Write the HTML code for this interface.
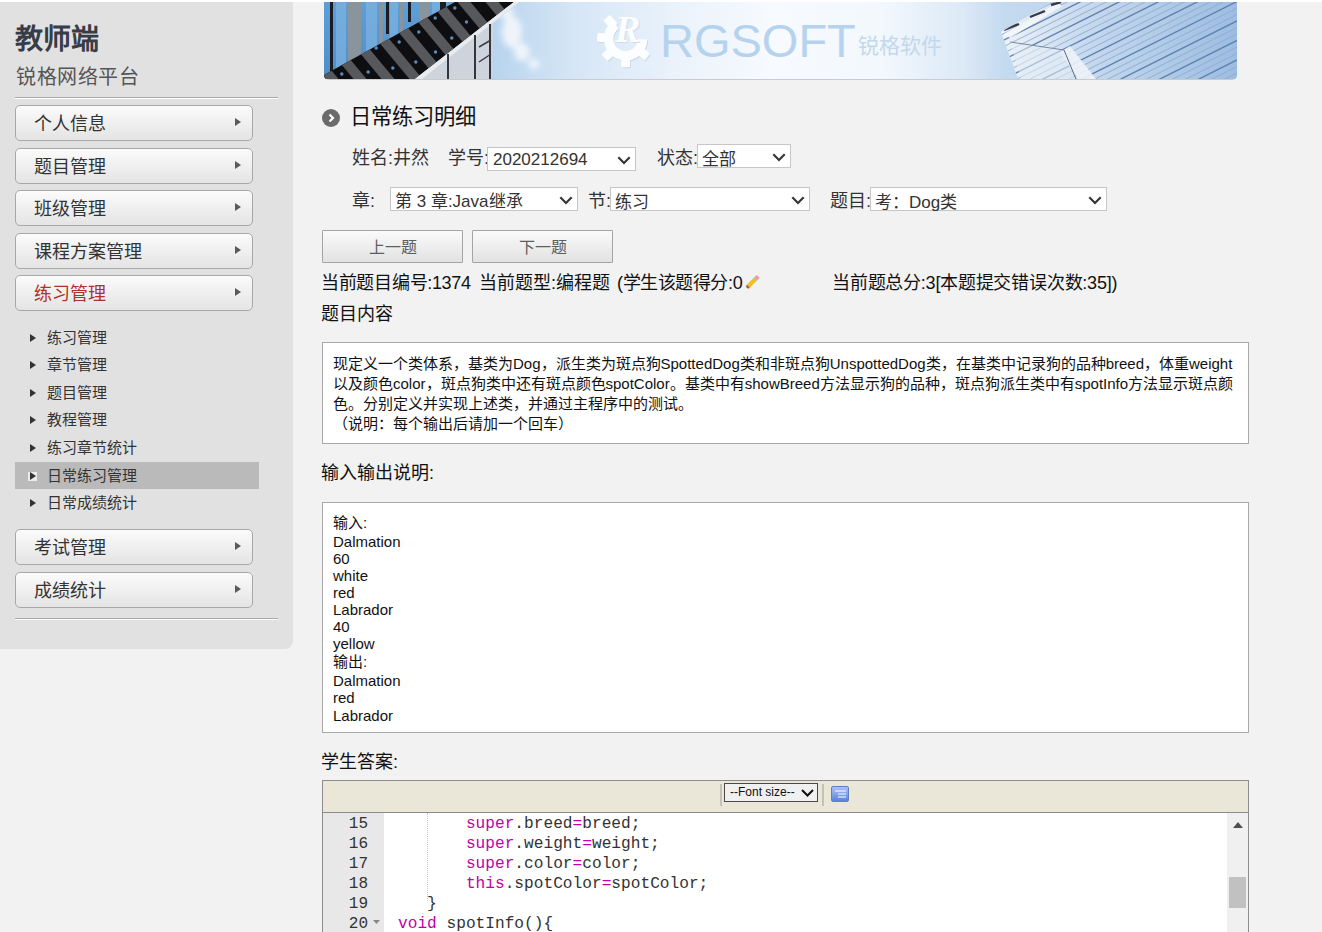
<!DOCTYPE html>
<html lang="zh-CN"><head><meta charset="utf-8">
<style>
*{margin:0;padding:0;box-sizing:border-box}
html,body{width:1322px;height:932px;overflow:hidden}
body{background:#f2f2f2;font-family:"Liberation Sans",sans-serif;color:#222;position:relative}
.abs{position:absolute;white-space:nowrap}
#topband{position:absolute;left:0;top:0;width:1322px;height:2px;background:#fff}
#side{position:absolute;left:-8px;top:2px;width:301px;height:647px;background:#e1e1e1;border-radius:0 0 8px 8px}
.hr{position:absolute;left:15px;width:263px;height:2px;border-top:1px solid #a9a9a9;border-bottom:1px solid #fff}
.mbtn{position:absolute;left:15px;width:238px;height:36px;border:1px solid #a8a8a8;border-radius:5px;
 background:linear-gradient(#fbfbfb,#e4e4e4);font-size:18px;color:#333;line-height:37px;padding-left:18px}
.mbtn .ar{position:absolute;left:219px;top:12px;width:0;height:0;border-left:6.5px solid #5a5a5a;border-top:4.5px solid transparent;border-bottom:4.5px solid transparent}
.sub{position:absolute;left:15px;width:244px;height:27px;font-size:15px;color:#333;line-height:27px;padding-left:32px}
.sub .ar{position:absolute;left:15px;top:10px;width:0;height:0;border-left:6px solid #333;border-top:4px solid transparent;border-bottom:4px solid transparent}
.sub.on .bx{position:absolute;left:13px;top:10px;width:9px;height:9px;background:#ececec}
.sub.on{background:#bababa}

.lbl{font-size:18px;color:#333;line-height:24px}
.dd{position:absolute;height:24px;border:1px solid #c6c6c6;background:#fff;font-size:17px;color:#333;line-height:22px;padding-left:4px;white-space:nowrap}
.dd svg{position:absolute;right:4px;top:7.5px}
.nbtn{position:absolute;top:230px;width:141px;height:33px;border:1px solid #a4a4a4;border-radius:1px;background:linear-gradient(#fafafa,#e2e2e2);font-size:16px;color:#5e5e5e;text-align:center;line-height:33px}
.box{position:absolute;left:322px;width:927px;border:1px solid #a9a9a9;background:#fff}
.dl{position:absolute;left:10px;font-size:15px;color:#111;line-height:20px;white-space:nowrap}
.gn{position:absolute;left:0;margin-top:-1px;width:45px;text-align:right;font-family:"Liberation Mono",monospace;font-size:16px;color:#333;line-height:20px}
.cl{position:absolute;left:75px;margin-top:-1px;font-family:"Liberation Mono",monospace;font-size:16.17px;color:#333;line-height:20px;white-space:pre}
.cl b{font-weight:normal;color:#c400a8}
</style></head><body>
<div id="topband"></div>
<div id="side"></div>
<div class="abs" style="left:15px;top:22.5px;font-size:28px;font-weight:bold;color:#373c47;line-height:34px">教师端</div>
<div class="abs" style="left:16px;top:64px;font-size:20px;letter-spacing:0.6px;color:#555;line-height:26px">锐格网络平台</div>
<div class="hr" style="top:97px"></div>
<div class="mbtn" style="top:105px">个人信息<span class="ar"></span></div>
<div class="mbtn" style="top:148px">题目管理<span class="ar"></span></div>
<div class="mbtn" style="top:190px">班级管理<span class="ar"></span></div>
<div class="mbtn" style="top:233px">课程方案管理<span class="ar"></span></div>
<div class="mbtn" style="top:275px;color:#b0302a">练习管理<span class="ar"></span></div>
<div class="sub" style="top:324px">练习管理<span class="ar"></span></div>
<div class="sub" style="top:351px">章节管理<span class="ar"></span></div>
<div class="sub" style="top:379px">题目管理<span class="ar"></span></div>
<div class="sub" style="top:406px">教程管理<span class="ar"></span></div>
<div class="sub" style="top:434px">练习章节统计<span class="ar"></span></div>
<div class="sub on" style="top:462px">日常练习管理<span class="bx"></span><span class="ar"></span></div>
<div class="sub" style="top:489px">日常成绩统计<span class="ar"></span></div>
<div class="mbtn" style="top:529px">考试管理<span class="ar"></span></div>
<div class="mbtn" style="top:572px">成绩统计<span class="ar"></span></div>
<div class="hr" style="top:618px"></div>


<!-- banner -->
<div id="banner" style="position:absolute;left:324px;top:2px;width:913px;height:78px;border-radius:0 0 5px 5px;overflow:hidden">
<svg width="913" height="78" viewBox="0 0 913 78">
<defs>
<linearGradient id="sky" x1="0" y1="0" x2="913" y2="0" gradientUnits="userSpaceOnUse">
<stop offset="0" stop-color="#9cc2e6"/>
<stop offset="0.186" stop-color="#b8d4ee"/>
<stop offset="0.274" stop-color="#d6e6f6"/>
<stop offset="0.383" stop-color="#eaf2fb"/>
<stop offset="0.49" stop-color="#f7fafe"/>
<stop offset="0.61" stop-color="#f3f8fd"/>
<stop offset="0.70" stop-color="#dce9f6"/>
<stop offset="0.745" stop-color="#c4daef"/>
<stop offset="1" stop-color="#a8c8e8"/>
</linearGradient>
<linearGradient id="bld" x1="0" y1="0" x2="1" y2="0">
<stop offset="0" stop-color="#eef3f8"/>
<stop offset="0.35" stop-color="#c7daee"/>
<stop offset="1" stop-color="#9cbde2"/>
</linearGradient>
<linearGradient id="glass" x1="0" y1="0" x2="0" y2="1">
<stop offset="0" stop-color="#5f9fd6"/>
<stop offset="1" stop-color="#4f8dc6"/>
</linearGradient>
<filter id="blur" x="-50%" y="-50%" width="200%" height="200%"><feGaussianBlur stdDeviation="3"/></filter>
<clipPath id="band"><polygon points="0,73 131,0 190,0 91,77 0,77"/></clipPath>
<clipPath id="bldc"><polygon points="677,30 728,0 913,0 913,77 694,77"/></clipPath>
</defs>
<rect width="913" height="77" fill="url(#sky)"/>
<!-- clouds -->
<g fill="#f4f8fc" opacity="0.9" filter="url(#blur)"><ellipse cx="188" cy="30" rx="10" ry="16"/><ellipse cx="198" cy="50" rx="8" ry="9"/><ellipse cx="182" cy="10" rx="7" ry="7"/><ellipse cx="210" cy="62" rx="6" ry="5"/></g>
<!-- left building glass -->
<polygon points="0,0 136,0 0,77" fill="url(#glass)"/>
<g fill="#8a949c"><rect x="24" y="0" width="13" height="62"/><rect x="55" y="0" width="4" height="45"/><rect x="76" y="0" width="3" height="33"/><rect x="95" y="0" width="10" height="22"/></g>
<g fill="#7fb4e2" opacity="0.7"><rect x="12" y="0" width="10" height="66"/><rect x="42" y="0" width="11" height="50"/><rect x="66" y="0" width="8" height="38"/><rect x="108" y="0" width="8" height="12"/></g>
<g fill="#1a1c22"><rect x="6" y="0" width="3" height="70"/><rect x="62" y="0" width="3" height="32"/><rect x="84" y="0" width="3" height="20"/><rect x="116" y="0" width="6" height="8"/></g>
<!-- dark band -->
<polygon points="0,73 131,0 190,0 91,77 0,77" fill="#0e0e10"/>
<g clip-path="url(#band)" stroke="#56585c" stroke-width="10"><line x1="-66" y1="-12" x2="18" y2="89"/><line x1="-38" y1="-12" x2="46" y2="89"/><line x1="-10" y1="-12" x2="74" y2="89"/><line x1="18" y1="-12" x2="102" y2="89"/><line x1="46" y1="-12" x2="130" y2="89"/><line x1="74" y1="-12" x2="158" y2="89"/><line x1="102" y1="-12" x2="186" y2="89"/><line x1="130" y1="-12" x2="214" y2="89"/><line x1="158" y1="-12" x2="242" y2="89"/></g>
<g fill="#5a8cc0" clip-path="url(#band)"><circle cx="17.8" cy="72" r="1.7"/><circle cx="44.2" cy="70" r="1.7"/><circle cx="29.2" cy="52" r="1.7"/><circle cx="68.8" cy="66" r="1.7"/><circle cx="52.2" cy="46" r="1.7"/><circle cx="91.8" cy="60" r="1.7"/><circle cx="75.2" cy="40" r="1.7"/><circle cx="58.5" cy="20" r="1.7"/><circle cx="111.5" cy="50" r="1.7"/><circle cx="94.8" cy="30" r="1.7"/><circle cx="127.8" cy="36" r="1.7"/><circle cx="111.2" cy="16" r="1.7"/><circle cx="142.5" cy="20" r="1.7"/><circle cx="130.8" cy="6" r="1.7"/></g>
<!-- light face -->
<polygon points="91,77 190,0 196,0 170,20 168,77" fill="#cdd4dc"/>
<polygon points="91,77 190,0 195,0 98,77" fill="#e8ecf0"/>
<g fill="#33363c"><rect x="123" y="52" width="2" height="25"/><rect x="150" y="33" width="2" height="44"/><rect x="165" y="22" width="2" height="55"/></g>
<g stroke="#3a3d44" stroke-width="1.5"><line x1="155" y1="45" x2="167" y2="38"/><line x1="155" y1="60" x2="167" y2="52"/></g>
<!-- gear logo -->
<g fill="#cdd9e6"><rect x="-4.5" y="-28.5" width="9" height="12" rx="1.5" transform="translate(302.4,37.8) rotate(318)"/><rect x="-4.5" y="-28.5" width="9" height="12" rx="1.5" transform="translate(302.4,37.8) rotate(273)"/><rect x="-4.5" y="-28.5" width="9" height="12" rx="1.5" transform="translate(302.4,37.8) rotate(228)"/><rect x="-4.5" y="-28.5" width="9" height="12" rx="1.5" transform="translate(302.4,37.8) rotate(180)"/><rect x="-4.5" y="-28.5" width="9" height="12" rx="1.5" transform="translate(302.4,37.8) rotate(130)"/></g><path d="M319.4,38.4 A17,17 0 1,1 292.9,23.7" fill="none" stroke="#cdd9e6" stroke-width="9.5"/><g fill="#fbfdff"><rect x="-4.5" y="-28.5" width="9" height="12" rx="1.5" transform="translate(301.6,36.8) rotate(318)"/><rect x="-4.5" y="-28.5" width="9" height="12" rx="1.5" transform="translate(301.6,36.8) rotate(273)"/><rect x="-4.5" y="-28.5" width="9" height="12" rx="1.5" transform="translate(301.6,36.8) rotate(228)"/><rect x="-4.5" y="-28.5" width="9" height="12" rx="1.5" transform="translate(301.6,36.8) rotate(180)"/><rect x="-4.5" y="-28.5" width="9" height="12" rx="1.5" transform="translate(301.6,36.8) rotate(130)"/></g><path d="M318.6,37.4 A17,17 0 1,1 292.1,22.7" fill="none" stroke="#fbfdff" stroke-width="9.5"/><text x="292" y="41" font-family="Liberation Serif" font-style="italic" font-weight="bold" font-size="38" fill="#d2dce6">R</text><text x="291" y="40" font-family="Liberation Serif" font-style="italic" font-weight="bold" font-size="38" fill="#fbfdff">R</text>
<text x="336" y="55" font-family="Liberation Sans" font-size="47" fill="#b6d3ee">RGSOFT</text>
<text x="534" y="51" font-family="Liberation Sans" font-size="21" fill="#c2d8ec">锐格软件</text>
<!-- right building -->
<polygon points="677,30 728,0 913,0 913,77 694,77" fill="url(#bld)"/>
<g clip-path="url(#bldc)"><line x1="660" y1="-10.5" x2="913" y2="-137.0" stroke="#5f82b0" stroke-width="1.4"/><line x1="660" y1="-4.0" x2="913" y2="-130.5" stroke="#8eaad0" stroke-width="0.9"/><line x1="660" y1="2.5" x2="913" y2="-124.0" stroke="#8eaad0" stroke-width="0.9"/><line x1="660" y1="9.0" x2="913" y2="-117.5" stroke="#5f82b0" stroke-width="1.4"/><line x1="660" y1="15.5" x2="913" y2="-111.0" stroke="#8eaad0" stroke-width="0.9"/><line x1="660" y1="22.0" x2="913" y2="-104.5" stroke="#8eaad0" stroke-width="0.9"/><line x1="660" y1="28.5" x2="913" y2="-98.0" stroke="#5f82b0" stroke-width="1.4"/><line x1="660" y1="35.0" x2="913" y2="-91.5" stroke="#8eaad0" stroke-width="0.9"/><line x1="660" y1="41.5" x2="913" y2="-85.0" stroke="#8eaad0" stroke-width="0.9"/><line x1="660" y1="48.0" x2="913" y2="-78.5" stroke="#5f82b0" stroke-width="1.4"/><line x1="660" y1="54.5" x2="913" y2="-72.0" stroke="#8eaad0" stroke-width="0.9"/><line x1="660" y1="61.0" x2="913" y2="-65.5" stroke="#8eaad0" stroke-width="0.9"/><line x1="660" y1="67.5" x2="913" y2="-59.0" stroke="#5f82b0" stroke-width="1.4"/><line x1="660" y1="74.0" x2="913" y2="-52.5" stroke="#8eaad0" stroke-width="0.9"/><line x1="660" y1="80.5" x2="913" y2="-46.0" stroke="#8eaad0" stroke-width="0.9"/><line x1="660" y1="87.0" x2="913" y2="-39.5" stroke="#5f82b0" stroke-width="1.4"/><line x1="660" y1="93.5" x2="913" y2="-33.0" stroke="#8eaad0" stroke-width="0.9"/><line x1="660" y1="100.0" x2="913" y2="-26.5" stroke="#8eaad0" stroke-width="0.9"/><line x1="660" y1="106.5" x2="913" y2="-20.0" stroke="#5f82b0" stroke-width="1.4"/><line x1="660" y1="113.0" x2="913" y2="-13.5" stroke="#8eaad0" stroke-width="0.9"/><line x1="660" y1="119.5" x2="913" y2="-7.0" stroke="#8eaad0" stroke-width="0.9"/><line x1="660" y1="126.0" x2="913" y2="-0.5" stroke="#5f82b0" stroke-width="1.4"/><line x1="660" y1="132.5" x2="913" y2="6.0" stroke="#8eaad0" stroke-width="0.9"/><line x1="660" y1="139.0" x2="913" y2="12.5" stroke="#8eaad0" stroke-width="0.9"/><line x1="660" y1="145.5" x2="913" y2="19.0" stroke="#5f82b0" stroke-width="1.4"/><line x1="660" y1="152.0" x2="913" y2="25.5" stroke="#8eaad0" stroke-width="0.9"/><line x1="660" y1="158.5" x2="913" y2="32.0" stroke="#8eaad0" stroke-width="0.9"/><line x1="660" y1="165.0" x2="913" y2="38.5" stroke="#5f82b0" stroke-width="1.4"/><line x1="660" y1="171.5" x2="913" y2="45.0" stroke="#8eaad0" stroke-width="0.9"/><line x1="660" y1="178.0" x2="913" y2="51.5" stroke="#8eaad0" stroke-width="0.9"/><line x1="660" y1="184.5" x2="913" y2="58.0" stroke="#5f82b0" stroke-width="1.4"/><line x1="660" y1="191.0" x2="913" y2="64.5" stroke="#8eaad0" stroke-width="0.9"/><line x1="660" y1="197.5" x2="913" y2="71.0" stroke="#8eaad0" stroke-width="0.9"/><line x1="660" y1="204.0" x2="913" y2="77.5" stroke="#5f82b0" stroke-width="1.4"/><line x1="660" y1="210.5" x2="913" y2="84.0" stroke="#8eaad0" stroke-width="0.9"/><line x1="660" y1="217.0" x2="913" y2="90.5" stroke="#8eaad0" stroke-width="0.9"/><line x1="660" y1="223.5" x2="913" y2="97.0" stroke="#5f82b0" stroke-width="1.4"/><line x1="660" y1="230.0" x2="913" y2="103.5" stroke="#8eaad0" stroke-width="0.9"/><line x1="660" y1="236.5" x2="913" y2="110.0" stroke="#8eaad0" stroke-width="0.9"/><line x1="660" y1="243.0" x2="913" y2="116.5" stroke="#5f82b0" stroke-width="1.4"/><line x1="660" y1="249.5" x2="913" y2="123.0" stroke="#8eaad0" stroke-width="0.9"/><line x1="660" y1="256.0" x2="913" y2="129.5" stroke="#8eaad0" stroke-width="0.9"/><line x1="660" y1="262.5" x2="913" y2="136.0" stroke="#5f82b0" stroke-width="1.4"/><line x1="660" y1="269.0" x2="913" y2="142.5" stroke="#8eaad0" stroke-width="0.9"/><line x1="660" y1="275.5" x2="913" y2="149.0" stroke="#8eaad0" stroke-width="0.9"/><line x1="660" y1="282.0" x2="913" y2="155.5" stroke="#5f82b0" stroke-width="1.4"/>
<polygon points="736,50 746,44 772,77 754,77" fill="#eef3f8" opacity="0.9"/>
<polygon points="680,32 733,1 738,4 686,36" fill="#f4f7fa" opacity="0.9"/>
<polygon points="686,40 740,48 752,77 697,77" fill="#e6eef6" opacity="0.55"/>
<line x1="740" y1="48" x2="752" y2="77" stroke="#5a6a80" stroke-width="1"/>
<line x1="686" y1="40" x2="740" y2="48" stroke="#7a8aa0" stroke-width="1"/>
<g stroke="#333c48" stroke-width="2.4"><line x1="680" y1="28" x2="695" y2="22"/><line x1="706" y1="15" x2="721" y2="9"/><line x1="727" y1="3" x2="737" y2="0"/></g>
</g>
<rect x="0" y="77" width="913" height="1" fill="#c6ccd2"/>
</svg>
</div>

<!-- title -->
<div class="abs" style="left:322px;top:109px;width:18px;height:18px;border-radius:50%;background:#6b6b6b"></div>
<svg class="abs" style="left:322px;top:109px" width="18" height="18"><polyline points="7.5,5.5 11,9 7.5,12.5" fill="none" stroke="#fff" stroke-width="2.2"/></svg>
<div class="abs" style="left:350px;top:104px;font-size:21.3px;color:#111;line-height:26px">日常练习明细</div>

<!-- row1 -->
<div class="abs lbl" style="left:352px;top:146px">姓名:井然</div>
<div class="abs lbl" style="left:448px;top:146px">学号:</div>
<div class="dd" style="left:487px;top:147px;width:149px;padding-top:1px;padding-left:5px">2020212694<svg width="14" height="9"><polyline points="1.3,1.3 7,7 12.7,1.3" fill="none" stroke="#333" stroke-width="2.1"/></svg></div>
<div class="abs lbl" style="left:657px;top:146px">状态:</div>
<div class="dd" style="left:697px;top:144px;width:94px;padding-top:4px">全部<svg width="14" height="9"><polyline points="1.3,1.3 7,7 12.7,1.3" fill="none" stroke="#333" stroke-width="2.1"/></svg></div>

<!-- row2 -->
<div class="abs lbl" style="left:352px;top:189px">章:</div>
<div class="dd" style="left:390px;top:187px;width:188px;padding-top:3px">第 3 章:Java继承<svg width="14" height="9"><polyline points="1.3,1.3 7,7 12.7,1.3" fill="none" stroke="#333" stroke-width="2.1"/></svg></div>
<div class="abs lbl" style="left:588px;top:189px">节:</div>
<div class="dd" style="left:610px;top:187px;width:200px;padding-top:4px">练习<svg width="14" height="9"><polyline points="1.3,1.3 7,7 12.7,1.3" fill="none" stroke="#333" stroke-width="2.1"/></svg></div>
<div class="abs lbl" style="left:830px;top:189px">题目:</div>
<div class="dd" style="left:870px;top:187px;width:237px;padding-top:4px">考：Dog类<svg width="14" height="9"><polyline points="1.3,1.3 7,7 12.7,1.3" fill="none" stroke="#333" stroke-width="2.1"/></svg></div>

<!-- nav buttons -->
<div class="nbtn" style="left:322px">上一题</div>
<div class="nbtn" style="left:472px">下一题</div>

<!-- info -->
<div class="abs lbl" style="left:321px;top:271px;color:#111;letter-spacing:-0.3px">当前题目编号:1374</div>
<div class="abs lbl" style="left:479px;top:271px;color:#111">当前题型:编程题</div>
<div class="abs lbl" style="left:617px;top:271px;color:#111;letter-spacing:-0.42px">(学生该题得分:0</div>
<svg class="abs" style="left:744px;top:274px" width="16" height="16"><g stroke-linecap="butt" stroke-width="4.2">
<line x1="3" y1="13.6" x2="5.2" y2="11.4" stroke="#ef8c66"/><line x1="5" y1="11.6" x2="11" y2="5.6" stroke="#f1c21a"/>
<line x1="10.8" y1="5.8" x2="12.4" y2="4.2" stroke="#b9b9b9"/><line x1="12.2" y1="4.4" x2="14.2" y2="2.4" stroke="#ee9a9a"/></g>
<line x1="3" y1="13.6" x2="4" y2="12.6" stroke="#555" stroke-width="2.6"/></svg>
<div class="abs lbl" style="left:832px;top:271px;color:#111;letter-spacing:-0.23px">当前题总分:3[本题提交错误次数:35])</div>
<div class="abs lbl" style="left:321px;top:302px;color:#111">题目内容</div>

<!-- desc box -->
<div class="box" style="top:342px;height:102px">
<div class="dl" style="top:11px">现定义一个类体系，基类为Dog，派生类为斑点狗SpottedDog类和非斑点狗UnspottedDog类，在基类中记录狗的品种breed，体重weight</div>
<div class="dl" style="top:31px">以及颜色color，斑点狗类中还有斑点颜色spotColor。基类中有showBreed方法显示狗的品种，斑点狗派生类中有spotInfo方法显示斑点颜</div>
<div class="dl" style="top:51px">色。分别定义并实现上述类，并通过主程序中的测试。</div>
<div class="dl" style="top:71px">（说明：每个输出后请加一个回车）</div>
</div>

<div class="abs lbl" style="left:321px;top:461px;color:#111">输入输出说明:</div>

<div class="box" style="top:502px;height:231px">
<div class="dl" style="top:10px">输入:</div>
<div class="dl" style="top:29px">Dalmation</div>
<div class="dl" style="top:46px">60</div>
<div class="dl" style="top:63px">white</div>
<div class="dl" style="top:80px">red</div>
<div class="dl" style="top:97px">Labrador</div>
<div class="dl" style="top:114px">40</div>
<div class="dl" style="top:131px">yellow</div>
<div class="dl" style="top:149px">输出:</div>
<div class="dl" style="top:168px">Dalmation</div>
<div class="dl" style="top:185px">red</div>
<div class="dl" style="top:203px">Labrador</div>
</div>

<div class="abs lbl" style="left:321px;top:750px;color:#111">学生答案:</div>

<!-- editor -->
<div id="ed" style="position:absolute;left:322px;top:780px;width:927px;height:160px;border:1px solid #8c8c8c;background:#fff;overflow:hidden">
 <div style="position:absolute;left:0;top:0;width:925px;height:32px;background:#ebe7d8;border-bottom:1px solid #8a8a8a"></div>
 <div style="position:absolute;left:397px;top:3px;width:2px;height:22px;background:#c4c2b8"></div>
 <div style="position:absolute;left:401px;top:2px;width:94px;height:19px;border:1px solid #4a4a4a;background:#f0f0f0;font-size:12px;line-height:17px;padding-left:5px;color:#111;white-space:nowrap">--Font size--<svg style="position:absolute;left:76px;top:5px" width="13" height="8"><polyline points="1,1 6.5,6.5 12,1" fill="none" stroke="#111" stroke-width="2"/></svg></div>
 <div style="position:absolute;left:499px;top:3px;width:2px;height:22px;background:#c4c2b8"></div>
 <div style="position:absolute;left:508px;top:5px;width:18px;height:16px;border-radius:2px;background:linear-gradient(#a8c4f4,#5a82dc);border:1px solid #5f7fbf"></div>
 <svg style="position:absolute;left:512px;top:9px" width="11" height="9"><g stroke="#fff" stroke-width="1"><line x1="0" y1="1" x2="11" y2="1"/><line x1="3" y1="4" x2="11" y2="4"/><line x1="3" y1="7" x2="11" y2="7"/></g></svg>
 <!-- gutter -->
 <div style="position:absolute;left:0;top:32px;width:61px;height:130px;background:#e8e8e8"></div>
 <div class="gn" style="top:34px">15</div>
 <div class="gn" style="top:54px">16</div>
 <div class="gn" style="top:74px">17</div>
 <div class="gn" style="top:94px">18</div>
 <div class="gn" style="top:114px">19</div>
 <div class="gn" style="top:134px">20</div>
 <svg style="position:absolute;left:50px;top:139px" width="8" height="5"><polygon points="0,0 7,0 3.5,4" fill="#888"/></svg>
 <div style="position:absolute;left:104px;top:32px;width:0;height:88px;border-left:1px dotted #c8c8c8"></div>
 <div class="cl" style="top:34px">       <b>super</b>.breed<b>=</b>breed;</div>
 <div class="cl" style="top:54px">       <b>super</b>.weight<b>=</b>weight;</div>
 <div class="cl" style="top:74px">       <b>super</b>.color<b>=</b>color;</div>
 <div class="cl" style="top:94px">       <b>this</b>.spotColor<b>=</b>spotColor;</div>
 <div class="cl" style="top:114px">   }</div>
 <div class="cl" style="top:134px"><b>void</b> spotInfo(){</div>
 <!-- scrollbar -->
 <div style="position:absolute;left:904px;top:32px;width:21px;height:130px;background:#f0f0f0"></div>
 <svg style="position:absolute;left:910px;top:41px" width="10" height="6"><polygon points="0,6 5,0 10,6" fill="#505050"/></svg>
 <div style="position:absolute;left:906px;top:96px;width:17px;height:31px;background:#c1c1c1"></div>
</div>
</body></html>
